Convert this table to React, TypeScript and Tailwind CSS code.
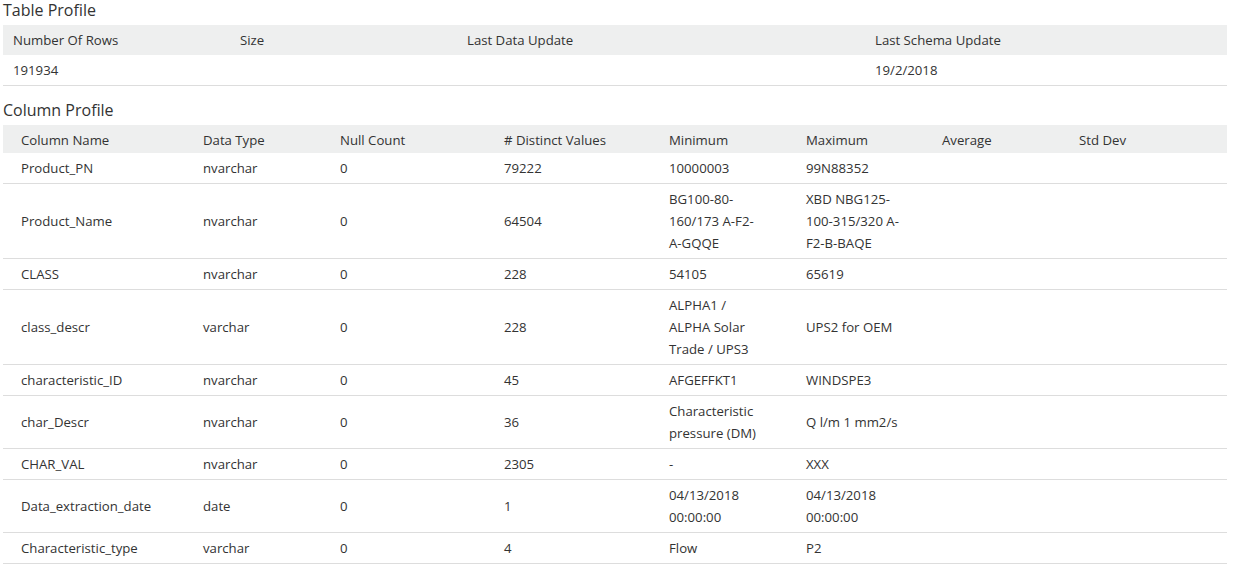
import React from 'react';

interface ColumnStat {
  name: string;
  type: string;
  nulls: string;
  distinct: string;
  min: string[];
  max: string[];
}

const tableHeaders = [
  { label: 'Number Of Rows', w: 'w-[227px]' },
  { label: 'Size', w: 'w-[227px]' },
  { label: 'Last Data Update', w: 'w-[408px]' },
  { label: 'Last Schema Update', w: 'w-[362px]' },
];

const tableValues = ['191934', '', '', '19/2/2018'];

const columnHeaders = [
  { label: 'Column Name', w: 'w-[182px]' },
  { label: 'Data Type', w: 'w-[137px]' },
  { label: 'Null Count', w: 'w-[164px]' },
  { label: '# Distinct Values', w: 'w-[165px]' },
  { label: 'Minimum', w: 'w-[137px]' },
  { label: 'Maximum', w: 'w-[136px]' },
  { label: 'Average', w: 'w-[137px]' },
  { label: 'Std Dev', w: 'w-[166px]' },
];

const columns: ColumnStat[] = [
  { name: 'Product_PN', type: 'nvarchar', nulls: '0', distinct: '79222', min: ['10000003'], max: ['99N88352'] },
  {
    name: 'Product_Name',
    type: 'nvarchar',
    nulls: '0',
    distinct: '64504',
    min: ['BG100-80-', '160/173 A-F2-', 'A-GQQE'],
    max: ['XBD NBG125-', '100-315/320 A-', 'F2-B-BAQE'],
  },
  { name: 'CLASS', type: 'nvarchar', nulls: '0', distinct: '228', min: ['54105'], max: ['65619'] },
  {
    name: 'class_descr',
    type: 'varchar',
    nulls: '0',
    distinct: '228',
    min: ['ALPHA1 /', 'ALPHA Solar', 'Trade / UPS3'],
    max: ['UPS2 for OEM'],
  },
  { name: 'characteristic_ID', type: 'nvarchar', nulls: '0', distinct: '45', min: ['AFGEFFKT1'], max: ['WINDSPE3'] },
  {
    name: 'char_Descr',
    type: 'nvarchar',
    nulls: '0',
    distinct: '36',
    min: ['Characteristic', 'pressure (DM)'],
    max: ['Q l/m 1 mm2/s'],
  },
  { name: 'CHAR_VAL', type: 'nvarchar', nulls: '0', distinct: '2305', min: ['-'], max: ['XXX'] },
  {
    name: 'Data_extraction_date',
    type: 'date',
    nulls: '0',
    distinct: '1',
    min: ['04/13/2018', '00:00:00'],
    max: ['04/13/2018', '00:00:00'],
  },
  { name: 'Characteristic_type', type: 'varchar', nulls: '0', distinct: '4', min: ['Flow'], max: ['P2'] },
];

function Lines({ lines }: { lines: string[] }) {
  return (
    <>
      {lines.map((l, i) => (
        <div key={i}>{l}</div>
      ))}
    </>
  );
}

export default function App() {
  return (
    <div className="bg-white min-h-screen text-[#333333] text-[13.2px] font-['Open_Sans','Noto_Sans',sans-serif]">
      <div className="w-[1224px] ml-[3px]">
        <h2 className="text-[16px] leading-[20px] mb-[5px] text-[#333333]">Table Profile</h2>
        <table className="w-full table-fixed border-collapse">
          <thead>
            <tr className="bg-[#eeefef]">
              {tableHeaders.map((h) => (
                <th key={h.label} className={`${h.w} h-[30px] pl-[10px] text-left font-normal leading-[22px]`}>
                  {h.label}
                </th>
              ))}
            </tr>
          </thead>
          <tbody>
            <tr className="border-b border-[#dddddd]">
              {tableValues.map((v, i) => (
                <td key={i} className="h-[30px] pl-[10px] leading-[22px]">
                  {v}
                </td>
              ))}
            </tr>
          </tbody>
        </table>

        <h2 className="mt-[14px] text-[16px] leading-[20px] mb-[5px] text-[#333333]">Column Profile</h2>
        <table className="w-full table-fixed border-collapse">
          <thead>
            <tr className="bg-[#eeefef]">
              {columnHeaders.map((h) => (
                <th key={h.label} className={`${h.w} h-[28px] pl-[18px] pt-[2px] text-left font-normal leading-[20px]`}>
                  {h.label}
                </th>
              ))}
            </tr>
          </thead>
          <tbody>
            {columns.map((c) => (
              <tr key={c.name} className="border-b border-[#dddddd] leading-[22px]">
                <td className="pl-[18px] py-[4px]">{c.name}</td>
                <td className="pl-[18px] py-[4px]">{c.type}</td>
                <td className="pl-[18px] py-[4px]">{c.nulls}</td>
                <td className="pl-[18px] py-[4px]">{c.distinct}</td>
                <td className="pl-[18px] py-[4px]">
                  <Lines lines={c.min} />
                </td>
                <td className="pl-[18px] py-[4px]">
                  <Lines lines={c.max} />
                </td>
                <td className="pl-[18px] py-[4px]"></td>
                <td className="pl-[18px] py-[4px]"></td>
              </tr>
            ))}
          </tbody>
        </table>
      </div>
    </div>
  );
}
